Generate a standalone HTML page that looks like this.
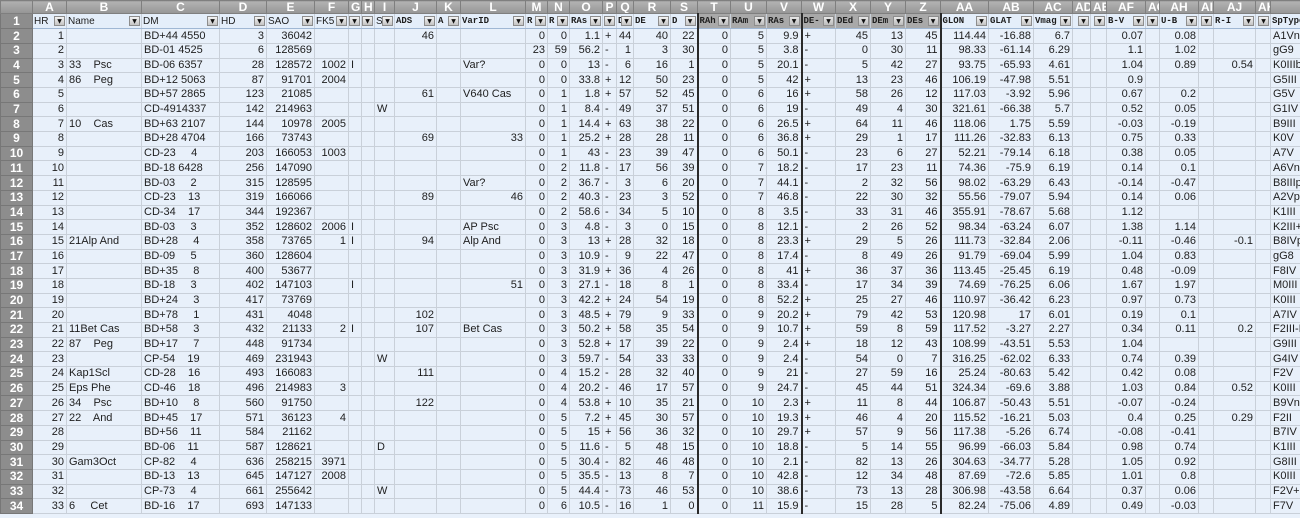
<!DOCTYPE html>
<html><head><meta charset="utf-8">
<style>
html,body{margin:0;padding:0;width:1300px;height:518px;overflow:hidden;background:#e9f1fb}
table{border-collapse:collapse;table-layout:fixed;width:1340px;font-family:"Liberation Sans",sans-serif;font-size:11px;color:#1e1e1e}
td,th{padding:0 2px;white-space:pre;overflow:hidden;border:1px solid #c9d0d9;text-align:right;height:14.7px;line-height:13px;box-sizing:border-box}
td{background:#e8f0fa}
tbody th{background:#8d8d8d;color:#fff;font-weight:bold;font-size:12px;text-align:center;border:1px solid #777}
thead th{height:13px;background:linear-gradient(#b3b3b3,#969696);color:#fff;font-weight:bold;font-size:12px;text-align:center;border:1px solid #7f7f7f;line-height:12px}
thead th:first-child{background:linear-gradient(#b0b0b0,#959595)}
td:nth-child(3),td:nth-child(4),td:nth-child(8),td:nth-child(10),td:nth-child(13),td:nth-child(17),td:nth-child(24),td:nth-child(39){text-align:left}
td:nth-child(21),td:nth-child(24),td:nth-child(28){border-left:2px solid #2a2a2a}
tr.f td{height:15.3px;position:relative;text-align:left;font-size:10px;background:#e4eefa;border-top:1px solid #7fa4d0;border-bottom:1px solid #9fb7d4;padding:0 1px}
tr.f td.g{background:#a9a9a9;font-family:"Liberation Mono",monospace;font-weight:bold;font-size:9px}
tr.f td.m{font-family:"Liberation Mono",monospace;font-weight:bold;font-size:9px}
.b{position:absolute;right:1px;top:2px;width:11px;height:10px;background:linear-gradient(#f4f4f4,#c4c4c4);border:1px solid #8d8d8d;box-sizing:border-box;font-size:6px;line-height:9px;text-align:center;color:#111;font-family:"DejaVu Sans",sans-serif}
tr.f td.g .b{background:linear-gradient(#e8e8e8,#bcbcbc)}
</style></head><body>
<table>
<colgroup><col style="width:32px"><col style="width:34px"><col style="width:75px"><col style="width:78px"><col style="width:47px"><col style="width:48px"><col style="width:34px"><col style="width:13px"><col style="width:13px"><col style="width:20px"><col style="width:42px"><col style="width:24px"><col style="width:65px"><col style="width:22px"><col style="width:22px"><col style="width:33px"><col style="width:14px"><col style="width:17px"><col style="width:37px"><col style="width:27px"><col style="width:33px"><col style="width:36px"><col style="width:35px"><col style="width:34px"><col style="width:35px"><col style="width:35px"><col style="width:35px"><col style="width:48px"><col style="width:45px"><col style="width:39px"><col style="width:18px"><col style="width:16px"><col style="width:39px"><col style="width:14px"><col style="width:39px"><col style="width:15px"><col style="width:42px"><col style="width:15px"><col style="width:70px"></colgroup>
<thead><tr><th></th><th>A</th><th>B</th><th>C</th><th>D</th><th>E</th><th>F</th><th>G</th><th>H</th><th>I</th><th>J</th><th>K</th><th>L</th><th>M</th><th>N</th><th>O</th><th>P</th><th>Q</th><th>R</th><th>S</th><th>T</th><th>U</th><th>V</th><th>W</th><th>X</th><th>Y</th><th>Z</th><th>AA</th><th>AB</th><th>AC</th><th>AD</th><th>AE</th><th>AF</th><th>AG</th><th>AH</th><th>AI</th><th>AJ</th><th>AK</th><th></th></tr></thead>
<tbody>
<tr class="f"><th>1</th><td>HR<span class="b">▼</span></td><td>Name<span class="b">▼</span></td><td>DM<span class="b">▼</span></td><td>HD<span class="b">▼</span></td><td>SAO<span class="b">▼</span></td><td>FK5<span class="b">▼</span></td><td><span class="b">▼</span></td><td><span class="b">▼</span></td><td>S<span class="b">▼</span></td><td class="m">ADS<span class="b">▼</span></td><td class="m">A<span class="b">▼</span></td><td class="m">VarID<span class="b">▼</span></td><td class="m">R<span class="b">▼</span></td><td class="m">R<span class="b">▼</span></td><td class="m">RAs<span class="b">▼</span></td><td><span class="b">▼</span></td><td class="m">D<span class="b">▼</span></td><td class="m">DE<span class="b">▼</span></td><td class="m">D<span class="b">▼</span></td><td class="g">RAh<span class="b">▼</span></td><td class="g">RAm<span class="b">▼</span></td><td class="g">RAs<span class="b">▼</span></td><td class="g">DE-<span class="b">▼</span></td><td class="g">DEd<span class="b">▼</span></td><td class="g">DEm<span class="b">▼</span></td><td class="g">DEs<span class="b">▼</span></td><td class="m">GLON<span class="b">▼</span></td><td class="m">GLAT<span class="b">▼</span></td><td class="m">Vmag<span class="b">▼</span></td><td><span class="b">▼</span></td><td><span class="b">▼</span></td><td class="m">B-V<span class="b">▼</span></td><td><span class="b">▼</span></td><td class="m">U-B<span class="b">▼</span></td><td><span class="b">▼</span></td><td class="m">R-I<span class="b">▼</span></td><td><span class="b">▼</span></td><td class="m">SpType</td></tr>
<tr><th>2</th><td>1<td><td>BD+44 4550<td>3<td>36042<td><td><td><td><td>46<td><td><td>0<td>0<td>1.1<td>+<td>44<td>40<td>22<td>0<td>5<td>9.9<td>+<td>45<td>13<td>45<td>114.44<td>-16.88<td>6.7<td><td><td>0.07<td><td>0.08<td><td><td><td>A1Vn</tr>
<tr><th>3</th><td>2<td><td>BD-01 4525<td>6<td>128569<td><td><td><td><td><td><td><td>23<td>59<td>56.2<td>-<td>1<td>3<td>30<td>0<td>5<td>3.8<td>-<td>0<td>30<td>11<td>98.33<td>-61.14<td>6.29<td><td><td>1.1<td><td>1.02<td><td><td><td>gG9</tr>
<tr><th>4</th><td>3<td>33    Psc<td>BD-06 6357<td>28<td>128572<td>1002<td>I<td><td><td><td><td>Var?<td>0<td>0<td>13<td>-<td>6<td>16<td>1<td>0<td>5<td>20.1<td>-<td>5<td>42<td>27<td>93.75<td>-65.93<td>4.61<td><td><td>1.04<td><td>0.89<td><td>0.54<td><td>K0IIIbCN</tr>
<tr><th>5</th><td>4<td>86    Peg<td>BD+12 5063<td>87<td>91701<td>2004<td><td><td><td><td><td><td>0<td>0<td>33.8<td>+<td>12<td>50<td>23<td>0<td>5<td>42<td>+<td>13<td>23<td>46<td>106.19<td>-47.98<td>5.51<td><td><td>0.9<td><td><td><td><td><td>G5III</tr>
<tr><th>6</th><td>5<td><td>BD+57 2865<td>123<td>21085<td><td><td><td><td>61<td><td>V640 Cas<td>0<td>1<td>1.8<td>+<td>57<td>52<td>45<td>0<td>6<td>16<td>+<td>58<td>26<td>12<td>117.03<td>-3.92<td>5.96<td><td><td>0.67<td><td>0.2<td><td><td><td>G5V</tr>
<tr><th>7</th><td>6<td><td>CD-4914337<td>142<td>214963<td><td><td><td>W<td><td><td><td>0<td>1<td>8.4<td>-<td>49<td>37<td>51<td>0<td>6<td>19<td>-<td>49<td>4<td>30<td>321.61<td>-66.38<td>5.7<td><td><td>0.52<td><td>0.05<td><td><td><td>G1IV</tr>
<tr><th>8</th><td>7<td>10    Cas<td>BD+63 2107<td>144<td>10978<td>2005<td><td><td><td><td><td><td>0<td>1<td>14.4<td>+<td>63<td>38<td>22<td>0<td>6<td>26.5<td>+<td>64<td>11<td>46<td>118.06<td>1.75<td>5.59<td><td><td>-0.03<td><td>-0.19<td><td><td><td>B9III</tr>
<tr><th>9</th><td>8<td><td>BD+28 4704<td>166<td>73743<td><td><td><td><td>69<td><td style="text-align:right">33<td>0<td>1<td>25.2<td>+<td>28<td>28<td>11<td>0<td>6<td>36.8<td>+<td>29<td>1<td>17<td>111.26<td>-32.83<td>6.13<td><td><td>0.75<td><td>0.33<td><td><td><td>K0V</tr>
<tr><th>10</th><td>9<td><td>CD-23     4<td>203<td>166053<td>1003<td><td><td><td><td><td><td>0<td>1<td>43<td>-<td>23<td>39<td>47<td>0<td>6<td>50.1<td>-<td>23<td>6<td>27<td>52.21<td>-79.14<td>6.18<td><td><td>0.38<td><td>0.05<td><td><td><td>A7V</tr>
<tr><th>11</th><td>10<td><td>BD-18 6428<td>256<td>147090<td><td><td><td><td><td><td><td>0<td>2<td>11.8<td>-<td>17<td>56<td>39<td>0<td>7<td>18.2<td>-<td>17<td>23<td>11<td>74.36<td>-75.9<td>6.19<td><td><td>0.14<td><td>0.1<td><td><td><td>A6Vn</tr>
<tr><th>12</th><td>11<td><td>BD-03     2<td>315<td>128595<td><td><td><td><td><td><td>Var?<td>0<td>2<td>36.7<td>-<td>3<td>6<td>20<td>0<td>7<td>44.1<td>-<td>2<td>32<td>56<td>98.02<td>-63.29<td>6.43<td><td><td>-0.14<td><td>-0.47<td><td><td><td>B8IIIpSi</tr>
<tr><th>13</th><td>12<td><td>CD-23    13<td>319<td>166066<td><td><td><td><td>89<td><td style="text-align:right">46<td>0<td>2<td>40.3<td>-<td>23<td>3<td>52<td>0<td>7<td>46.8<td>-<td>22<td>30<td>32<td>55.56<td>-79.07<td>5.94<td><td><td>0.14<td><td>0.06<td><td><td><td>A2Vp</tr>
<tr><th>14</th><td>13<td><td>CD-34    17<td>344<td>192367<td><td><td><td><td><td><td><td>0<td>2<td>58.6<td>-<td>34<td>5<td>10<td>0<td>8<td>3.5<td>-<td>33<td>31<td>46<td>355.91<td>-78.67<td>5.68<td><td><td>1.12<td><td><td><td><td><td>K1III</tr>
<tr><th>15</th><td>14<td><td>BD-03     3<td>352<td>128602<td>2006<td>I<td><td><td><td><td>AP Psc<td>0<td>3<td>4.8<td>-<td>3<td>0<td>15<td>0<td>8<td>12.1<td>-<td>2<td>26<td>52<td>98.34<td>-63.24<td>6.07<td><td><td>1.38<td><td>1.14<td><td><td><td>K2III+</tr>
<tr><th>16</th><td>15<td>21Alp And<td>BD+28     4<td>358<td>73765<td>1<td>I<td><td><td>94<td><td>Alp And<td>0<td>3<td>13<td>+<td>28<td>32<td>18<td>0<td>8<td>23.3<td>+<td>29<td>5<td>26<td>111.73<td>-32.84<td>2.06<td><td><td>-0.11<td><td>-0.46<td><td>-0.1<td><td>B8IVpMnHg</tr>
<tr><th>17</th><td>16<td><td>BD-09     5<td>360<td>128604<td><td><td><td><td><td><td><td>0<td>3<td>10.9<td>-<td>9<td>22<td>47<td>0<td>8<td>17.4<td>-<td>8<td>49<td>26<td>91.79<td>-69.04<td>5.99<td><td><td>1.04<td><td>0.83<td><td><td><td>gG8</tr>
<tr><th>18</th><td>17<td><td>BD+35     8<td>400<td>53677<td><td><td><td><td><td><td><td>0<td>3<td>31.9<td>+<td>36<td>4<td>26<td>0<td>8<td>41<td>+<td>36<td>37<td>36<td>113.45<td>-25.45<td>6.19<td><td><td>0.48<td><td>-0.09<td><td><td><td>F8IV</tr>
<tr><th>19</th><td>18<td><td>BD-18     3<td>402<td>147103<td><td>I<td><td><td><td><td style="text-align:right">51<td>0<td>3<td>27.1<td>-<td>18<td>8<td>1<td>0<td>8<td>33.4<td>-<td>17<td>34<td>39<td>74.69<td>-76.25<td>6.06<td><td><td>1.67<td><td>1.97<td><td><td><td>M0III</tr>
<tr><th>20</th><td>19<td><td>BD+24     3<td>417<td>73769<td><td><td><td><td><td><td><td>0<td>3<td>42.2<td>+<td>24<td>54<td>19<td>0<td>8<td>52.2<td>+<td>25<td>27<td>46<td>110.97<td>-36.42<td>6.23<td><td><td>0.97<td><td>0.73<td><td><td><td>K0III</tr>
<tr><th>21</th><td>20<td><td>BD+78     1<td>431<td>4048<td><td><td><td><td>102<td><td><td>0<td>3<td>48.5<td>+<td>79<td>9<td>33<td>0<td>9<td>20.2<td>+<td>79<td>42<td>53<td>120.98<td>17<td>6.01<td><td><td>0.19<td><td>0.1<td><td><td><td>A7IV</tr>
<tr><th>22</th><td>21<td>11Bet Cas<td>BD+58     3<td>432<td>21133<td>2<td>I<td><td><td>107<td><td>Bet Cas<td>0<td>3<td>50.2<td>+<td>58<td>35<td>54<td>0<td>9<td>10.7<td>+<td>59<td>8<td>59<td>117.52<td>-3.27<td>2.27<td><td><td>0.34<td><td>0.11<td><td>0.2<td><td>F2III-IV</tr>
<tr><th>23</th><td>22<td>87    Peg<td>BD+17     7<td>448<td>91734<td><td><td><td><td><td><td><td>0<td>3<td>52.8<td>+<td>17<td>39<td>22<td>0<td>9<td>2.4<td>+<td>18<td>12<td>43<td>108.99<td>-43.51<td>5.53<td><td><td>1.04<td><td><td><td><td><td>G9III</tr>
<tr><th>24</th><td>23<td><td>CP-54    19<td>469<td>231943<td><td><td><td>W<td><td><td><td>0<td>3<td>59.7<td>-<td>54<td>33<td>33<td>0<td>9<td>2.4<td>-<td>54<td>0<td>7<td>316.25<td>-62.02<td>6.33<td><td><td>0.74<td><td>0.39<td><td><td><td>G4IV</tr>
<tr><th>25</th><td>24<td>Kap1Scl<td>CD-28    16<td>493<td>166083<td><td><td><td><td>111<td><td><td>0<td>4<td>15.2<td>-<td>28<td>32<td>40<td>0<td>9<td>21<td>-<td>27<td>59<td>16<td>25.24<td>-80.63<td>5.42<td><td><td>0.42<td><td>0.08<td><td><td><td>F2V</tr>
<tr><th>26</th><td>25<td>Eps Phe<td>CD-46    18<td>496<td>214983<td>3<td><td><td><td><td><td><td>0<td>4<td>20.2<td>-<td>46<td>17<td>57<td>0<td>9<td>24.7<td>-<td>45<td>44<td>51<td>324.34<td>-69.6<td>3.88<td><td><td>1.03<td><td>0.84<td><td>0.52<td><td>K0III</tr>
<tr><th>27</th><td>26<td>34    Psc<td>BD+10     8<td>560<td>91750<td><td><td><td><td>122<td><td><td>0<td>4<td>53.8<td>+<td>10<td>35<td>21<td>0<td>10<td>2.3<td>+<td>11<td>8<td>44<td>106.87<td>-50.43<td>5.51<td><td><td>-0.07<td><td>-0.24<td><td><td><td>B9Vn</tr>
<tr><th>28</th><td>27<td>22    And<td>BD+45    17<td>571<td>36123<td>4<td><td><td><td><td><td><td>0<td>5<td>7.2<td>+<td>45<td>30<td>57<td>0<td>10<td>19.3<td>+<td>46<td>4<td>20<td>115.52<td>-16.21<td>5.03<td><td><td>0.4<td><td>0.25<td><td>0.29<td><td>F2II</tr>
<tr><th>29</th><td>28<td><td>BD+56    11<td>584<td>21162<td><td><td><td><td><td><td><td>0<td>5<td>15<td>+<td>56<td>36<td>32<td>0<td>10<td>29.7<td>+<td>57<td>9<td>56<td>117.38<td>-5.26<td>6.74<td><td><td>-0.08<td><td>-0.41<td><td><td><td>B7IV</tr>
<tr><th>30</th><td>29<td><td>BD-06    11<td>587<td>128621<td><td><td><td>D<td><td><td><td>0<td>5<td>11.6<td>-<td>5<td>48<td>15<td>0<td>10<td>18.8<td>-<td>5<td>14<td>55<td>96.99<td>-66.03<td>5.84<td><td><td>0.98<td><td>0.74<td><td><td><td>K1III</tr>
<tr><th>31</th><td>30<td>Gam3Oct<td>CP-82     4<td>636<td>258215<td>3971<td><td><td><td><td><td><td>0<td>5<td>30.4<td>-<td>82<td>46<td>48<td>0<td>10<td>2.1<td>-<td>82<td>13<td>26<td>304.63<td>-34.77<td>5.28<td><td><td>1.05<td><td>0.92<td><td><td><td>G8III</tr>
<tr><th>32</th><td>31<td><td>BD-13    13<td>645<td>147127<td>2008<td><td><td><td><td><td><td>0<td>5<td>35.5<td>-<td>13<td>8<td>7<td>0<td>10<td>42.8<td>-<td>12<td>34<td>48<td>87.69<td>-72.6<td>5.85<td><td><td>1.01<td><td>0.8<td><td><td><td>K0III</tr>
<tr><th>33</th><td>32<td><td>CP-73     4<td>661<td>255642<td><td><td><td>W<td><td><td><td>0<td>5<td>44.4<td>-<td>73<td>46<td>53<td>0<td>10<td>38.6<td>-<td>73<td>13<td>28<td>306.98<td>-43.58<td>6.64<td><td><td>0.37<td><td>0.06<td><td><td><td>F2V+</tr>
<tr><th>34</th><td>33<td>6     Cet<td>BD-16    17<td>693<td>147133<td><td><td><td><td><td><td><td>0<td>6<td>10.5<td>-<td>16<td>1<td>0<td>0<td>11<td>15.9<td>-<td>15<td>28<td>5<td>82.24<td>-75.06<td>4.89<td><td><td>0.49<td><td>-0.03<td><td><td><td>F7V</tr>
</tbody></table>
</body></html>
